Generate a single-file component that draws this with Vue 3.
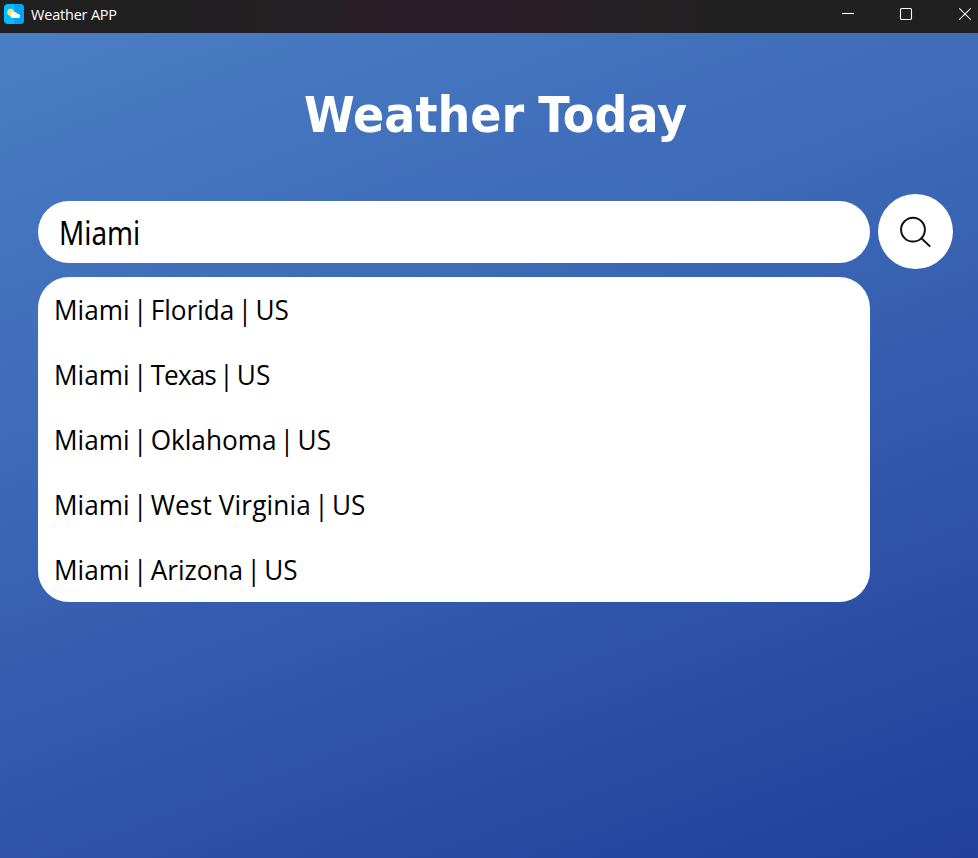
<script setup>
import { ref } from 'vue'

const query = ref('Miami')
const places = [
  { text: 'Miami | Florida | US', id: 'florida' },
  { text: 'Miami | Texas | US', id: 'texas' },
  { text: 'Miami | Oklahoma | US', id: 'oklahoma' },
  { text: 'Miami | West Virginia | US', id: 'virginia' },
  { text: 'Miami | Arizona | US', id: 'arizona' },
].map((p) => ({ ...p, parts: p.text.split(' | ') }))
</script>

<template>
  <div class="window">
    <header class="titlebar">
      <svg class="logo" width="20" height="20" viewBox="0 0 20 20">
        <rect width="20" height="20" rx="4" fill="#00bdfd" />
        <path d="M10 0h6a4 4 0 0 1 4 4v12a4 4 0 0 1-4 4h-6z" fill="#00a4f5" />
        <circle cx="6.8" cy="8.2" r="3.5" fill="#ffdf76" />
        <path d="M8.6 14a2.3 2.3 0 0 1-1.6-3.9 2.3 2.3 0 0 1 1.6-1.5 3 3 0 0 1 4.6 1.2A2.2 2.2 0 0 1 14.6 14z" fill="#fff" />
      </svg>
      <span class="app-name">Weather APP</span>
      <div class="controls">
        <svg width="14" height="14" viewBox="0 0 14 14"><path d="M2 6.5h12" /></svg>
        <svg width="14" height="14" viewBox="0 0 14 14"><rect x="1.5" y="1.5" width="11" height="11" rx="1.2" /></svg>
        <svg width="14" height="14" viewBox="0 0 14 14"><path d="M1.3 1.3l11.4 11.4M12.7 1.3L1.3 12.7" /></svg>
      </div>
    </header>
    <main class="content">
      <h1 class="title">Weather Today</h1>
      <div class="search">
        <div class="field">
          <input v-model="query" class="entry" type="text" spellcheck="false" />
        </div>
        <button class="go" type="button" aria-label="Search">
          <svg width="34" height="34" viewBox="0 0 34 34">
            <circle cx="14" cy="14.7" r="11.9" />
            <path d="M22.4 23.2l8.8 8.4" />
          </svg>
        </button>
      </div>
      <ul class="results">
        <li v-for="p in places" :key="p.id" class="place">
          <span class="label">{{ p.parts[0] }} | <span :class="p.id">{{ p.parts[1] }}</span> | {{ p.parts[2] }}</span>
        </li>
      </ul>
    </main>
  </div>
</template>

<style>
body {
  margin: 0;
  overflow: hidden;
}
</style>

<style scoped>
.window {
  display: flex;
  flex-direction: column;
  height: 858px;
  font-family: 'Open Sans', 'Noto Sans', sans-serif;
}
.titlebar {
  box-sizing: border-box;
  display: flex;
  align-items: flex-start;
  height: 33px;
  padding: 4px 6px 0 4px;
  background: linear-gradient(90deg, #202020 0%, #211f21 22%, #251f23 35%, #291c22 37%, #281c28 41%, #281c28 51%, #291c22 55%, #251f23 60%, #202020 75%);
}
.app-name {
  margin-left: 7px;
  color: #fff;
  font-size: 14.5px;
  line-height: 21px;
  letter-spacing: -0.2px;
}
.controls {
  display: flex;
  gap: 45px;
  margin: 3px 0 0 auto;
}
.controls svg {
  fill: none;
  stroke: #fff;
  stroke-width: 1.1;
}
.content {
  flex: 1;
  box-sizing: border-box;
  padding: 48px 25px 0 38px;
  background: linear-gradient(160deg, #4a7ec4 0%, #3e6ab8 35%, #20409a 100%);
}
.title {
  margin: 0;
  height: 113px;
  line-height: 70px;
  text-align: center;
  color: #fff;
  font-family: 'DejaVu Sans Condensed', 'Noto Sans', sans-serif;
  font-stretch: condensed;
  font-size: 49px;
  font-weight: 700;
  word-spacing: -2px;
  white-space: nowrap;
  transform: scaleX(1.045);
}
.search {
  display: flex;
  align-items: center;
  gap: 8px;
  height: 75px;
}
.field {
  box-sizing: border-box;
  flex: none;
  width: 832px;
  height: 62px;
  padding: 2px 20px 0 20.5px;
  border-radius: 31px;
  background: #fff;
}
.entry {
  display: block;
  width: 100%;
  height: 60px;
  padding: 0;
  border: 0;
  outline: 0;
  background: transparent;
  color: #000;
  font: 32px 'Noto Sans', sans-serif;
  transform: scaleX(0.87);
  transform-origin: left center;
}
.go {
  display: flex;
  flex: none;
  align-items: center;
  justify-content: center;
  width: 75px;
  height: 75px;
  padding: 0;
  border: 0;
  border-radius: 50%;
  background: #fff;
}
.go svg {
  fill: none;
  stroke: #111;
  stroke-width: 2;
}
.results {
  width: 832px;
  margin: 8px 0 0;
  padding: 0;
  border-radius: 31px;
  background: #fff;
  list-style: none;
}
.place {
  height: 65px;
  padding-left: 16px;
  line-height: 65px;
  color: #000;
  font-size: 28px;
  white-space: nowrap;
}
.label {
  display: inline-block;
  word-spacing: -3.7px;
  transform: scaleX(0.935);
  transform-origin: left center;
}
.texas {
  letter-spacing: -1px;
}
.virginia {
  letter-spacing: 0.15px;
  word-spacing: 0;
}
</style>
